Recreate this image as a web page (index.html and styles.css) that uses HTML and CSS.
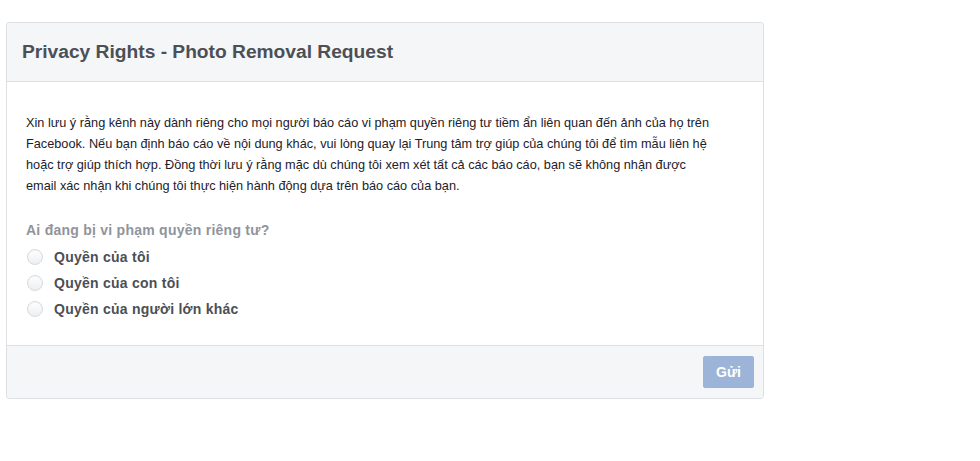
FILE: index.html
```html
<!DOCTYPE html>
<html lang="vi">
<head>
<meta charset="utf-8">
<title>Privacy Rights - Photo Removal Request</title>
<link rel="stylesheet" href="styles.css">
</head>
<body>
<div class="page">
  <div class="card">
    <div class="card-header">
      <h1 class="title">Privacy Rights - Photo Removal Request</h1>
    </div>
    <div class="card-body">
      <p class="intro">Xin lưu ý rằng kênh này dành riêng cho mọi người báo cáo vi phạm quyền riêng tư tiềm ẩn liên quan đến ảnh của họ trên<br>Facebook. Nếu bạn định báo cáo về nội dung khác, vui lòng quay lại Trung tâm trợ giúp của chúng tôi để tìm mẫu liên hệ<br>hoặc trợ giúp thích hợp. Đồng thời lưu ý rằng mặc dù chúng tôi xem xét tất cả các báo cáo, bạn sẽ không nhận được<br>email xác nhận khi chúng tôi thực hiện hành động dựa trên báo cáo của bạn.</p>
      <div class="question">Ai đang bị vi phạm quyền riêng tư?</div>
      <div class="options">
        <label class="option"><span class="radio"></span><span class="option-text">Quyền của tôi</span></label>
        <label class="option"><span class="radio"></span><span class="option-text">Quyền của con tôi</span></label>
        <label class="option"><span class="radio"></span><span class="option-text">Quyền của người lớn khác</span></label>
      </div>
    </div>
    <div class="card-footer">
      <button class="submit" type="button">Gửi</button>
    </div>
  </div>
</div>
</body>
</html>
```
FILE: styles.css
```css
html, body {
  margin: 0;
  padding: 0;
  background: #ffffff;
}
body {
  font-family: "Liberation Sans", Arial, Helvetica, sans-serif;
  color: #1d2129;
}
.page {
  padding: 22px 6px 0 6px;
}
.card {
  width: 756px;
  border: 1px solid #dddfe2;
  border-radius: 3px;
  background: #ffffff;
}
.card-header {
  background: #f5f6f7;
  border-bottom: 1px solid #dddfe2;
  border-radius: 3px 3px 0 0;
  height: 58px;
  display: flex;
  align-items: center;
  padding: 0 15px;
}
.title {
  margin: 0;
  font-size: 19.2px;
  font-weight: bold;
  color: #4b4f56;
  line-height: 24px;
}
.card-body {
  padding: 30px 19px 23px 19px;
}
.intro {
  margin: 0;
  font-size: 12.72px;
  line-height: 21px;
  color: #1d2129;
}
.question {
  margin-top: 25px;
  font-size: 14px;
  letter-spacing: 0.25px;
  line-height: 18px;
  font-weight: bold;
  color: #90949c;
}
.options {
  display: flex;
  flex-direction: column;
  margin-top: 5px;
}
.option {
  display: flex;
  align-items: center;
  height: 26px;
  padding-left: 1px;
}
.radio {
  width: 14px;
  height: 14px;
  border-radius: 50%;
  border: 1px solid #d8dadf;
  background: linear-gradient(#ffffff, #eceef1);
  box-shadow: inset 0 1px 1px rgba(0, 0, 0, 0.04);
  margin-right: 11px;
  flex: none;
}
.option-text {
  font-size: 14px;
  letter-spacing: 0.25px;
  font-weight: bold;
  color: #4b4f56;
}
.card-footer {
  background: #f5f6f7;
  border-top: 1px solid #dddfe2;
  border-radius: 0 0 3px 3px;
  display: flex;
  justify-content: flex-end;
  padding: 10px 9px 10px 9px;
}
.submit {
  width: 51px;
  height: 32px;
  border: 1px solid #9cb4d8;
  border-radius: 2px;
  background: #9cb4d8;
  color: #ffffff;
  font-family: "Liberation Sans", Arial, sans-serif;
  font-size: 14px;
  font-weight: bold;
  padding: 0;
}
```
